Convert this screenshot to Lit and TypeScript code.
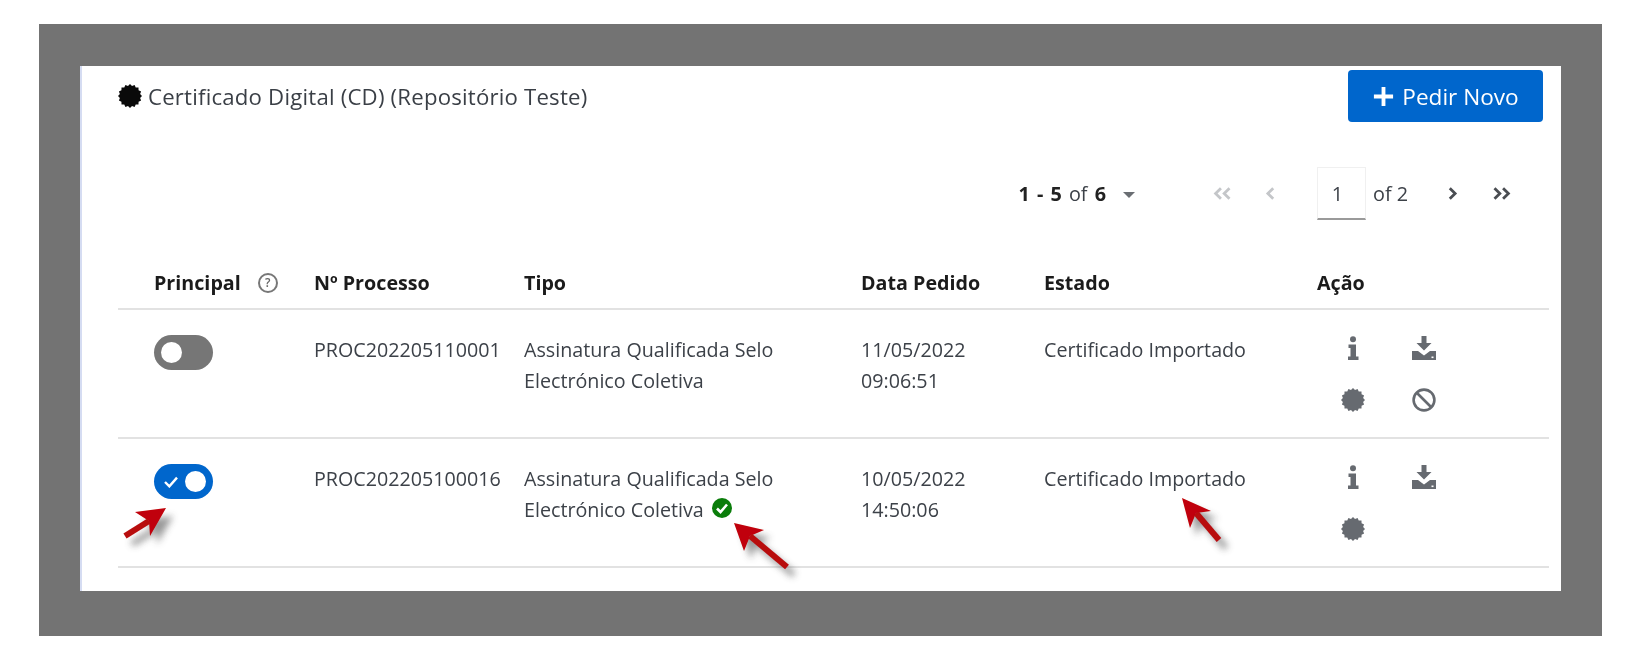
import { LitElement, html, css, svg } from "lit";
import { customElement } from "lit/decorators.js";

const sealPoints = (cx: number, cy: number, r: number, inner: number, n = 16) => {
  const pts: string[] = [];
  for (let i = 0; i < n * 2; i++) {
    const a = (Math.PI * i) / n;
    const rad = i % 2 ? inner : r;
    pts.push(`${(cx + rad * Math.sin(a)).toFixed(2)},${(cy - rad * Math.cos(a)).toFixed(2)}`);
  }
  return pts.join(" ");
};

const seal = (cls = "icon") => html`<svg class=${cls} viewBox="0 0 24 24">
  <polygon fill="currentColor" points=${sealPoints(12, 12, 12, 10.3)}></polygon>
</svg>`;

const info = () => html`<svg class="icon" viewBox="0 0 24 24">
  <circle cx="12" cy="3.2" r="3" fill="currentColor"></circle>
  <path fill="currentColor" d="M7.5 8.5h7.5v12h2.5v3.5H7v-3.5h2.5v-8.5h-2z"></path>
</svg>`;

const download = () => html`<svg class="icon" viewBox="0 0 24 24">
  <path fill="currentColor" d="M9.5 0h5v7h5l-7.5 7.5L4.500 7h5z"></path>
  <path fill="currentColor" d="M0 15h6l6 4.500 6-4.500h6v9H0z"></path>
  <rect x="19.500" y="20.500" width="2" height="1.600" fill="#fff"></rect>
</svg>`;

const ban = () => html`<svg class="icon" viewBox="0 0 24 24">
  <circle cx="12" cy="12" r="10.400" fill="none" stroke="currentColor" stroke-width="2.600"></circle>
  <path d="M5 5l14 14" stroke="currentColor" stroke-width="2.600"></path>
</svg>`;

const chevrons = (double: boolean, left: boolean, off: boolean) => html`<svg
  class="chev ${off ? "off" : ""}"
  viewBox="0 0 20 14"
  style="transform:${left ? "scaleX(-1)" : "none"}"
>
  ${double
    ? svg`<path d="M3 2l5 5-5 5M11 2l5 5-5 5" fill="none" stroke="currentColor" stroke-width="2.600"></path>`
    : svg`<path d="M7 2l5 5-5 5" fill="none" stroke="currentColor" stroke-width="2.600"></path>`}
</svg>`;

const arrows = [
  { tip: [166, 508], w1: [135, 512], w2: [150, 536], tail: [125, 536], notch: [149, 521] },
  { tip: [734, 523], w1: [764, 530], w2: [744, 551], tail: [787, 567], notch: [750, 536] },
  { tip: [1182, 498], w1: [1211, 511], w2: [1190, 528], tail: [1219, 540], notch: [1196, 513] },
];

const rows = [
  { proc: "PROC202205110001", date: "11/05/2022", time: "09:06:51", on: false },
  { proc: "PROC202205100016", date: "10/05/2022", time: "14:50:06", on: true },
];

@customElement("app-root")
export class AppRoot extends LitElement {
  static styles = css`
    :host {
      display: block;
      width: 1640px;
      height: 656px;
      box-sizing: border-box;
      padding: 24px 38px 20px 39px;
      background: #fff;
      font-family: "Open Sans", "Liberation Sans", sans-serif;
      color: #3c4148;
      position: relative;
      overflow: hidden;
    }
    .frame {
      height: 612px;
      box-sizing: border-box;
      padding: 42px 41px 45px;
      background: #737373;
    }
    .card {
      height: 525px;
      box-sizing: border-box;
      background: #fff;
      border-left: 2px solid #d5dcf2;
      padding: 4px 12px 0 36px;
      filter: blur(0.4px);
    }
    .top {
      display: flex;
      justify-content: space-between;
      align-items: flex-start;
      padding-right: 6px;
    }
    .title {
      display: flex;
      align-items: center;
      gap: 6px;
      font-size: 22.2px;
      letter-spacing: 0.2px;
      height: 52px;
      color: #3a3f46;
    }
    .title-seal {
      width: 24px;
      height: 24px;
      color: #0a0a0a;
    }
    .btn {
      width: 195px;
      height: 52px;
      box-sizing: border-box;
      display: flex;
      align-items: center;
      justify-content: center;
      gap: 7px;
      background: #0066cc;
      color: #fff;
      border-radius: 4px;
      font-size: 22.6px;
    }
    .btn svg {
      width: 23px;
      height: 23px;
    }
    .pager {
      display: flex;
      align-items: center;
      justify-content: flex-end;
      height: 53px;
      margin-top: 45px;
      padding-right: 36px;
      font-size: 19.8px;
    }
    .pager b {
      color: #222;
    }
    .count {
      white-space: nowrap;
      word-spacing: 2px;
    }
    .caret {
      width: 0;
      height: 0;
      margin: 2px 76px 0 17px;
      border-left: 6px solid transparent;
      border-right: 6px solid transparent;
      border-top: 6px solid #6a6e73;
    }
    .chev {
      width: 22px;
      height: 15px;
      color: #4a4d52;
    }
    .chev.off {
      color: #c4c6c9;
    }
    .prev {
      margin-left: 26px;
      margin-right: 36px;
      line-height: 0;
    }
    .page-input {
      width: 49px;
      height: 53px;
      box-sizing: border-box;
      display: flex;
      align-items: center;
      justify-content: center;
      padding-right: 8px;
      border: 1px solid #f0f0f0;
      border-bottom: 2px solid #9a9a9a;
    }
    .of {
      margin: 0 34px 0 7px;
      white-space: nowrap;
    }
    .last {
      margin-left: 27px;
      line-height: 0;
    }
    .grid {
      display: grid;
      grid-template-columns: 196px 210px 337px 183px 273px 1fr;
      font-size: 19.7px;
      line-height: 30.5px;
      white-space: nowrap;
    }
    .head {
      height: 60px;
      margin-top: 30px;
      align-items: center;
      border-bottom: 2px solid #e2e2e2;
      box-sizing: border-box;
      padding-top: 8px;
      font-weight: 700;
      font-size: 19.7px;
      color: #1b1b1b;
    }
    .first {
      padding-left: 36px;
    }
    .head .first {
      display: flex;
      align-items: center;
      gap: 17px;
    }
    .help {
      width: 20px;
      height: 20px;
      box-sizing: border-box;
      border: 2px solid #777;
      border-radius: 50%;
      display: flex;
      align-items: center;
      justify-content: center;
      font-size: 12px;
      line-height: 1;
      font-weight: 600;
      color: #666;
    }
    .row {
      height: 129px;
      box-sizing: border-box;
      padding-top: 25px;
      border-bottom: 2px solid #e2e2e2;
    }
    .toggle {
      width: 59px;
      height: 35px;
      border-radius: 18px;
      background: #767676;
      display: flex;
      align-items: center;
      padding: 0 7px;
      box-sizing: border-box;
    }
    .toggle.on {
      background: #0066cc;
      justify-content: space-between;
      padding: 0 7px 0 9px;
    }
    .knob {
      width: 21px;
      height: 21px;
      border-radius: 50%;
      background: #fff;
    }
    .toggle svg {
      width: 16px;
      height: 12px;
    }
    .ok {
      display: inline-block;
      vertical-align: -1px;
      width: 20px;
      height: 20px;
      margin-left: 8px;
    }
    .actions {
      display: grid;
      grid-template-columns: 71px 71px;
      grid-auto-rows: 52px;
      justify-items: center;
      margin-top: 1px;
      color: #666a70;
    }
    .icon {
      width: 24px;
      height: 24px;
    }
    .overlay {
      position: absolute;
      left: 0;
      top: 0;
      width: 1640px;
      height: 656px;
      pointer-events: none;
    }
  `;

  private arrow(a: (typeof arrows)[number]) {
    const pts = [a.tip, a.w1, a.notch, a.w2].map((p) => p.join(",")).join(" ");
    return svg`
      <g transform="translate(7 8)" filter="url(#soft)" opacity="0.55">
        <polygon points=${pts} fill="#444"></polygon>
        <line x1=${a.notch[0]} y1=${a.notch[1]} x2=${a.tail[0]} y2=${a.tail[1]} stroke="#444" stroke-width="6"></line>
      </g>
      <g filter="url(#edge)">
        <polygon points=${pts} fill="#c00008"></polygon>
        <line x1=${a.notch[0]} y1=${a.notch[1]} x2=${a.tail[0]} y2=${a.tail[1]} stroke="#b80a10" stroke-width="6"></line>
      </g>`;
  }

  render() {
    return html`
      <div class="frame">
        <div class="card">
          <div class="top">
            <div class="title">${seal("title-seal")}<span>Certificado Digital (CD) (Repositório Teste)</span></div>
            <div class="btn">
              <svg viewBox="0 0 24 24"><path d="M12 2v20M2 12h20" stroke="#fff" stroke-width="4"></path></svg>
              <span>Pedir Novo</span>
            </div>
          </div>
          <div class="pager">
            <span class="count"><b>1 - 5</b> of <b>6</b></span>
            <span class="caret"></span>
            ${chevrons(true, true, true)}
            <span class="prev">${chevrons(false, true, true)}</span>
            <span class="page-input">1</span>
            <span class="of">of 2</span>
            ${chevrons(false, false, false)}
            <span class="last">${chevrons(true, false, false)}</span>
          </div>
          <div class="grid head">
            <div class="first"><span>Principal</span><span class="help">?</span></div>
            <div>Nº Processo</div>
            <div>Tipo</div>
            <div>Data Pedido</div>
            <div>Estado</div>
            <div>Ação</div>
          </div>
          ${rows.map(
            (r) => html`
              <div class="grid row">
                <div class="first">
                  <div class="toggle ${r.on ? "on" : ""}">
                    ${r.on
                      ? html`<svg viewBox="0 0 14 11"><path d="M1.500 5.500l4 4 7-8" fill="none" stroke="#fff" stroke-width="2.200"></path></svg>`
                      : ""}
                    <div class="knob"></div>
                  </div>
                </div>
                <div>${r.proc}</div>
                <div>
                  Assinatura Qualificada Selo<br />Electrónico Coletiva${r.on
                    ? html`<svg class="ok" viewBox="0 0 20 20">
                        <circle cx="10" cy="10" r="10" fill="#0a7d0a"></circle>
                        <path d="M5 10.500l3.500 3.500 6.500-7.500" fill="none" stroke="#fff" stroke-width="2.600"></path>
                      </svg>`
                    : ""}
                </div>
                <div>${r.date}<br />${r.time}</div>
                <div>Certificado Importado</div>
                <div class="actions">
                  ${info()} ${download()} ${seal()} ${r.on ? "" : ban()}
                </div>
              </div>
            `
          )}
        </div>
      </div>
      <svg class="overlay" viewBox="0 0 1640 656">
        <defs>
          <filter id="soft" x="-50%" y="-50%" width="200%" height="200%"><feGaussianBlur stdDeviation="3.500"></feGaussianBlur></filter>
          <filter id="edge" x="-20%" y="-20%" width="140%" height="140%"><feGaussianBlur stdDeviation="0.600"></feGaussianBlur></filter>
        </defs>
        ${arrows.map((a) => this.arrow(a))}
      </svg>
    `;
  }
}
